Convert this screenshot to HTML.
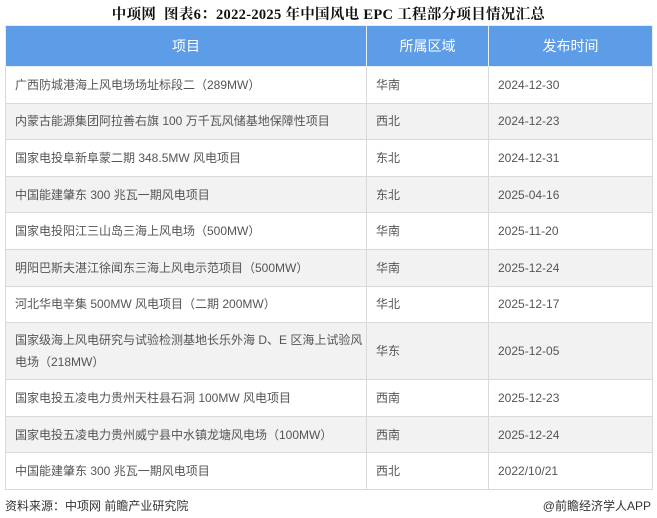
<!DOCTYPE html>
<html><head><meta charset="utf-8"><style>
body{margin:0;width:657px;height:518px;background:#fff;font-family:"Liberation Sans","Noto Sans CJK SC",sans-serif;position:relative;overflow:hidden}
.title{position:absolute;top:3px;left:0;width:657px;text-align:center;font-family:"Liberation Serif","Noto Serif CJK SC",serif;font-weight:bold;font-size:14.5px;color:#111;letter-spacing:0.3px}
table{position:absolute;left:5px;top:25px;width:647px;border-collapse:collapse;table-layout:fixed;font-size:12px;color:#555}
td,th{border:1px solid #d9d9d9;padding:0 0 0 9px;text-align:left;line-height:22px;box-sizing:border-box}
th{background:#5d9ce6;color:#fff;font-weight:normal;font-size:14px;text-align:center;padding:0;height:41px;border-color:#e8eef8}
tr:nth-child(odd) td{background:#f2f2f2}
td{height:36.6px}
.f{position:absolute;top:497px;font-size:12px;color:#333}
</style></head><body>
<div class="title">中项网&nbsp; 图表6：2022-2025 年中国风电 EPC 工程部分项目情况汇总</div>
<table>
<colgroup><col style="width:361px"><col style="width:122px"><col style="width:164px"></colgroup>
<tr><th>项目</th><th>所属区域</th><th>发布时间</th></tr>
<tr><td>广西防城港海上风电场场址标段二（289MW）</td><td>华南</td><td>2024-12-30</td></tr>
<tr><td>内蒙古能源集团阿拉善右旗 100 万千瓦风储基地保障性项目</td><td>西北</td><td>2024-12-23</td></tr>
<tr><td>国家电投阜新阜蒙二期 348.5MW 风电项目</td><td>东北</td><td>2024-12-31</td></tr>
<tr><td>中国能建肇东 300 兆瓦一期风电项目</td><td>东北</td><td>2025-04-16</td></tr>
<tr><td>国家电投阳江三山岛三海上风电场（500MW）</td><td>华南</td><td>2025-11-20</td></tr>
<tr><td>明阳巴斯夫湛江徐闻东三海上风电示范项目（500MW）</td><td>华南</td><td>2025-12-24</td></tr>
<tr><td>河北华电辛集 500MW 风电项目（二期 200MW）</td><td>华北</td><td>2025-12-17</td></tr>
<tr><td style="height:57px">国家级海上风电研究与试验检测基地长乐外海 D、E 区海上试验风电场（218MW）</td><td>华东</td><td>2025-12-05</td></tr>
<tr><td>国家电投五凌电力贵州天柱县石洞 100MW 风电项目</td><td>西南</td><td>2025-12-23</td></tr>
<tr><td>国家电投五凌电力贵州威宁县中水镇龙塘风电场（100MW）</td><td>西南</td><td>2025-12-24</td></tr>
<tr><td>中国能建肇东 300 兆瓦一期风电项目</td><td>西北</td><td>2022/10/21</td></tr>
</table>
<div class="f" style="left:5px">资料来源：中项网 前瞻产业研究院</div>
<div class="f" style="right:6px">@前瞻经济学人APP</div>
</body></html>
